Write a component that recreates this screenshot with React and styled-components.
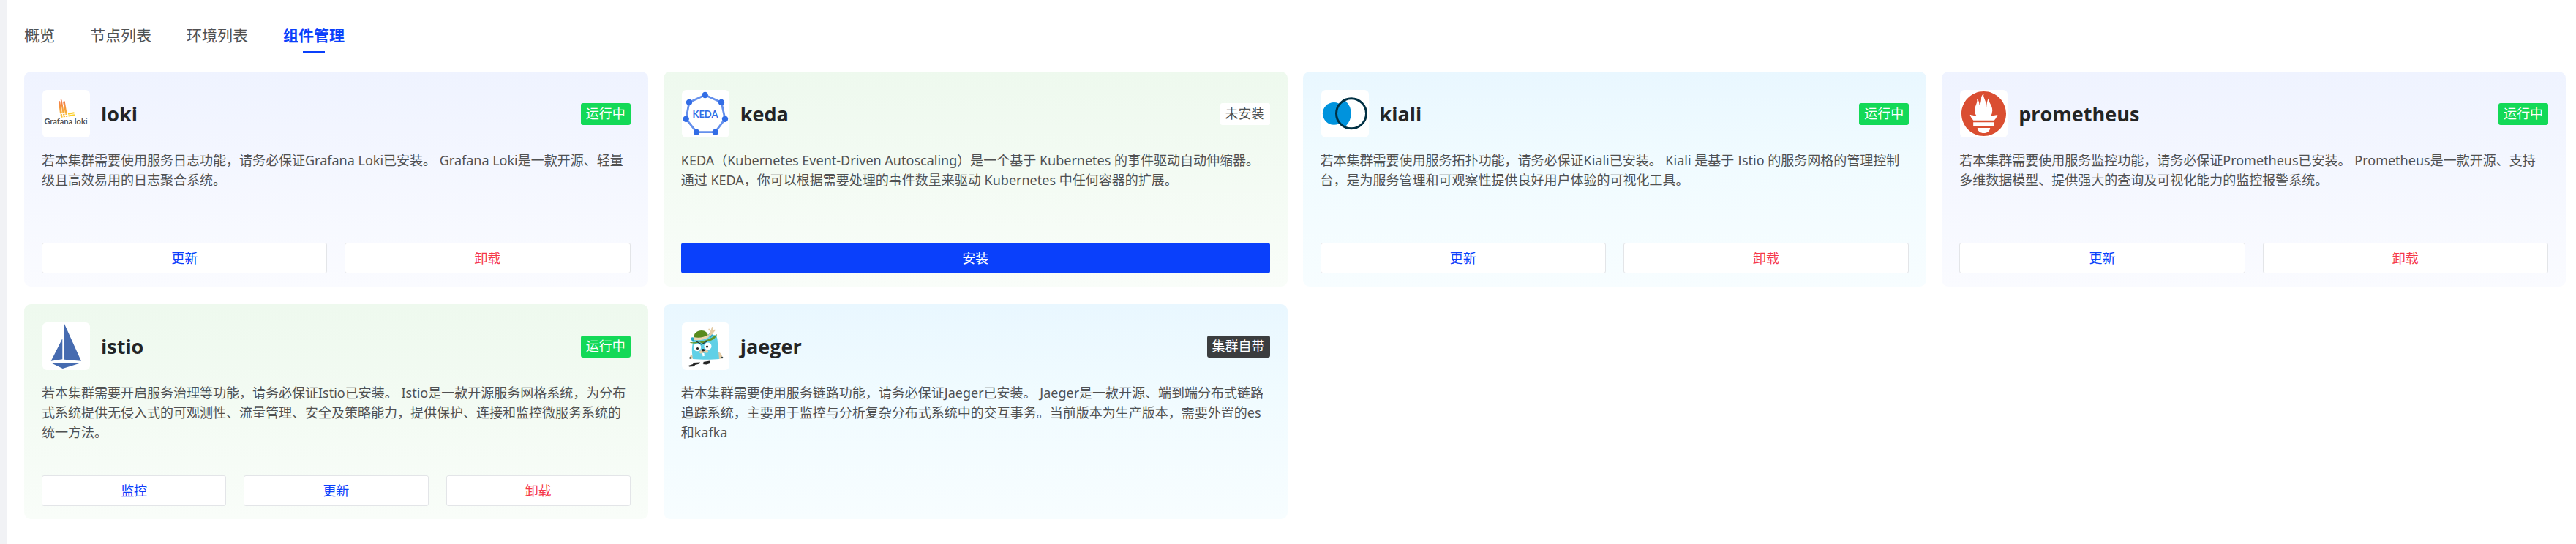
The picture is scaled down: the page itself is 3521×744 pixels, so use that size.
import React from "react";
import styled, { createGlobalStyle, css } from "styled-components";
import { SiPrometheus } from "react-icons/si";

const GlobalStyle = createGlobalStyle`
  *, *::before, *::after { box-sizing: border-box; }
  body {
    margin: 0;
    background: #fff;
    color: #505152;
    font-family: "Noto Sans", "Noto Sans CJK SC", sans-serif;
    font-size: 18px;
    line-height: 27px;
  }
`;

const Page = styled.div`
  min-height: 100vh;
  border-left: 9px solid #f1f2f5;
  padding: 33px 14px 33px 24px;
`;

const Tabs = styled.nav`
  display: flex;
  gap: 48px;
  margin-bottom: 25px;
`;

const Tab = styled.a`
  display: flex;
  flex-direction: column;
  align-items: center;
  gap: 7px;
  color: ${(p) => (p.$active ? "#0a40fb" : "#505152")};
  font-size: 21px;
  font-weight: ${(p) => (p.$active ? 700 : 400)};
  line-height: 30px;
  text-decoration: none;

  &::after {
    content: "";
    width: 30px;
    height: 3px;
    background: ${(p) => (p.$active ? "#0a40fb" : "transparent")};
  }
`;

const Grid = styled.main`
  display: grid;
  grid-template-columns: repeat(4, minmax(0, 1fr));
  gap: 24px 21px;
`;

const tones = {
  blue: "linear-gradient(#eff3ff, #fafbff)",
  green: "linear-gradient(#eef9ee, #f9fdf9)",
  cyan: "linear-gradient(#e9f7ff, #f0fbff 40%, #f7fdff)",
};

const Card = styled.article`
  display: flex;
  flex-direction: column;
  min-height: 294px;
  padding: 25px 24px 18px;
  border-radius: 9px;
  background: ${(p) => tones[p.$tone]};
`;

const CardHead = styled.header`
  display: flex;
  align-items: center;
  gap: 15px;
  padding-left: 1px;
`;

const Logo = styled.div`
  display: grid;
  place-items: center;
  flex: none;
  width: 65px;
  height: 65px;
  border-radius: 6px;
  background: #fff;
  overflow: hidden;
`;

const Name = styled.h2`
  flex: 1;
  margin: 0;
  color: #232425;
  font-family: "Open Sans", "Noto Sans CJK SC", sans-serif;
  font-size: 27px;
  font-weight: 700;
  line-height: 36px;
`;

const badges = {
  running: css`background: #13d957; color: #fff;`,
  absent: css`background: #fff; color: #505152;`,
  builtin: css`background: #3b3d3f; color: #fff;`,
};

const Badge = styled.span`
  padding: 1px 7px 2px;
  border-radius: 3px;
  ${(p) => badges[p.$kind]}
`;

const Description = styled.p`
  margin: 18px 0;
`;

const Actions = styled.footer`
  display: flex;
  gap: 24px;
  margin-top: auto;
`;

const buttons = {
  plain: css`background: #fff; border-color: #e3e5e8; color: #0a40fb;`,
  danger: css`background: #fff; border-color: #e3e5e8; color: #f5384b;`,
  primary: css`background: #0a40fb; border-color: #0a40fb; color: #fff;`,
};

const Button = styled.button`
  flex: 1;
  height: 42px;
  padding: 0;
  border: 1px solid;
  border-radius: 3px;
  font: inherit;
  cursor: pointer;
  ${(p) => buttons[p.$kind]}
`;

const LogoText = styled.text`
  font-family: Lato, sans-serif;
  font-weight: 700;
  font-size: ${(p) => p.$size}px;
  text-anchor: middle;
`;

function LokiLogo() {
  return (
    <svg width="65" height="65" viewBox="0 0 65 65" aria-hidden="true">
      <defs>
        <linearGradient id="lokiFlame" x1="0" y1="12" x2="0" y2="38" gradientUnits="userSpaceOnUse">
          <stop offset="0" stopColor="#f0714f" />
          <stop offset="1" stopColor="#fbc52d" />
        </linearGradient>
      </defs>
      <g fill="url(#lokiFlame)">
        <path d="M22 16l2-1 3 17-3 .5zM24.600 12l2 1.800 3.200 18-2.300.4zM28 16l2.600-.8 2.800 16-2.600.5z" />
        <path d="M24.500 33.400l2.400-.4.300 1.800-2.400.4zM28 32.900l2.300-.4.300 1.800-2.300.4zM31.200 32.300l2.400-.4.300 1.800-2.400.4zM25 36.200l2.400-.4.300 1.800-2.400.4zM28.500 35.700l2.300-.4.300 1.800-2.300.4zM31.700 35.200l2.400-.4.300 1.800-2.400.4z" />
      </g>
      <path d="M34.800 31.700l8.500-1.500.4 2-8.500 1.500zM35.300 34.600l8.500-1.400.3 2-8.500 1.400z" fill="#fbd02b" />
      <LogoText x="32" y="47" $size={11} fill="#555">Grafana loki</LogoText>
    </svg>
  );
}

const kedaPoints = [[31.700, 7], [54, 17], [59, 39.700], [45.700, 57.700], [20, 57.700], [5.700, 39.700], [10, 17]];

function KedaLogo() {
  return (
    <svg width="65" height="65" viewBox="0 0 65 65" aria-hidden="true">
      <polygon points={kedaPoints.join(" ")} fill="none" stroke="#6590ec" strokeWidth="2.800" />
      {kedaPoints.map(([x, y]) => (
        <circle key={`${x}-${y}`} cx={x} cy={y} r="4.200" fill="#326de6" />
      ))}
      <LogoText x="32" y="38" $size={13} fill="#326de6">KEDA</LogoText>
    </svg>
  );
}

function KialiLogo() {
  return (
    <svg width="65" height="65" viewBox="0 0 65 65" aria-hidden="true">
      <defs>
        <clipPath id="kialiRing">
          <circle cx="41" cy="32.300" r="20.500" />
        </clipPath>
      </defs>
      <circle cx="17.300" cy="32.300" r="15.400" fill="#0093dd" />
      <circle cx="41" cy="32.300" r="20.500" fill="#fff" />
      <circle cx="17.300" cy="32.300" r="23.500" fill="#0093dd" clipPath="url(#kialiRing)" />
      <circle cx="41" cy="32.300" r="20.500" fill="none" stroke="#013144" strokeWidth="3" />
    </svg>
  );
}

function IstioLogo() {
  return (
    <svg width="65" height="65" viewBox="0 0 65 65" fill="#466bb0" aria-hidden="true">
      <path d="M30 2v48.700l23 2zM27.300 22v28.300l-15.600 2.400zM11.700 55.300h41L27.700 63z" />
    </svg>
  );
}

function JaegerLogo() {
  return (
    <svg width="65" height="65" viewBox="0 0 65 65" aria-hidden="true">
      <path d="M14 44c-3 1-4 4-2 6l4-1zM48 40c4 0 8 4 7 9l-4 1-4-6z" fill="#e3cba5" />
      <path d="M15 28c-2-4 0-7 3-7l26-4c3 0 4 2 4.500 6L51 50c-9 1-25 1-36 0-1-8-2-14 0-22z" fill="#60d0e6" />
      <path d="M12 21c4-2 5 0 5 4l-3 1zM36 17c2-4 6-3 6 1l-3 3z" fill="#2ba5c4" />
      <path d="M10.500 27c14 1 28-3 37.500-11-1 6-8 10-15 10l-4 3-5-2c-5 2-10 2-13.500 0z" fill="#65952a" />
      <path d="M16 21c0-6 5-10 11-10 5 0 8 3 9 7-6 4-13 6-19 6z" fill="#578a1e" />
      <path d="M16 20c8 2 14 0 20-3l1 3c-6 4-13 5-20 4z" fill="#e8d5b2" />
      <path d="M36 18l3-5-3-4 1.500-.5 2 3L41 6l2 .5-1 5 3-2 1 1-5 6-3 3z" fill="#e3cba5" />
      <path d="M20 26l7 4 7-4" fill="none" stroke="#21383e" strokeWidth="1.200" />
      <circle cx="21" cy="34" r="5.200" fill="#fff" />
      <circle cx="35.500" cy="32.500" r="5" fill="#fff" />
      <circle cx="21.500" cy="35.500" r="1.600" fill="#222" />
      <circle cx="34.500" cy="33" r="1.600" fill="#222" />
      <path d="M28 42h2.500l.3 4-2.400.2z" fill="#fff" />
      <path d="M24 40c1-3 9-4 12-1 1 4-5 2-6 2-2 1-6 3-6-1z" fill="#e3cba5" />
      <ellipse cx="29" cy="37.800" rx="2.300" ry="1.700" fill="#222" />
      <circle cx="11.500" cy="48.500" r="1.300" fill="#344" />
      <circle cx="55" cy="48" r="1.300" fill="#344" />
      <path d="M9 59l6-2 1-2 9-.5-1 2-6 1.500-1 2-7 .5zM29 54l9-1.500.5 3.500-5 1.500-5-.5 2-1.500z" fill="#252525" />
    </svg>
  );
}

const update = { label: "更新", kind: "plain" };
const uninstall = { label: "卸载", kind: "danger" };
const running = { label: "运行中", kind: "running" };

const components = [
  {
    name: "loki",
    tone: "blue",
    logo: <LokiLogo />,
    badge: running,
    text: "若本集群需要使用服务日志功能，请务必保证Grafana Loki已安装。 Grafana Loki是一款开源、轻量级且高效易用的日志聚合系统。",
    actions: [update, uninstall],
  },
  {
    name: "keda",
    tone: "green",
    logo: <KedaLogo />,
    badge: { label: "未安装", kind: "absent" },
    text: "KEDA（Kubernetes Event-Driven Autoscaling）是一个基于 Kubernetes 的事件驱动自动伸缩器。通过 KEDA，你可以根据需要处理的事件数量来驱动 Kubernetes 中任何容器的扩展。",
    actions: [{ label: "安装", kind: "primary" }],
  },
  {
    name: "kiali",
    tone: "cyan",
    logo: <KialiLogo />,
    badge: running,
    text: "若本集群需要使用服务拓扑功能，请务必保证Kiali已安装。 Kiali 是基于 Istio 的服务网格的管理控制台，是为服务管理和可观察性提供良好用户体验的可视化工具。",
    actions: [update, uninstall],
  },
  {
    name: "prometheus",
    tone: "blue",
    logo: <SiPrometheus size={61} color="#da4e31" aria-hidden="true" />,
    badge: running,
    text: "若本集群需要使用服务监控功能，请务必保证Prometheus已安装。 Prometheus是一款开源、支持多维数据模型、提供强大的查询及可视化能力的监控报警系统。",
    actions: [update, uninstall],
  },
  {
    name: "istio",
    tone: "green",
    logo: <IstioLogo />,
    badge: running,
    text: "若本集群需要开启服务治理等功能，请务必保证Istio已安装。 Istio是一款开源服务网格系统，为分布式系统提供无侵入式的可观测性、流量管理、安全及策略能力，提供保护、连接和监控微服务系统的统一方法。",
    actions: [{ label: "监控", kind: "plain" }, update, uninstall],
  },
  {
    name: "jaeger",
    tone: "cyan",
    logo: <JaegerLogo />,
    badge: { label: "集群自带", kind: "builtin" },
    text: "若本集群需要使用服务链路功能，请务必保证Jaeger已安装。 Jaeger是一款开源、端到端分布式链路追踪系统，主要用于监控与分析复杂分布式系统中的交互事务。当前版本为生产版本，需要外置的es和kafka",
    actions: [],
  },
];

const tabs = ["概览", "节点列表", "环境列表", "组件管理"];

export default function App() {
  return (
    <Page lang="zh-CN">
      <GlobalStyle />
      <Tabs>
        {tabs.map((tab) => (
          <Tab key={tab} href="#" $active={tab === "组件管理"}>{tab}</Tab>
        ))}
      </Tabs>
      <Grid>
        {components.map((item) => (
          <Card key={item.name} $tone={item.tone}>
            <CardHead>
              <Logo>{item.logo}</Logo>
              <Name>{item.name}</Name>
              <Badge $kind={item.badge.kind}>{item.badge.label}</Badge>
            </CardHead>
            <Description>{item.text}</Description>
            {item.actions.length > 0 && (
              <Actions>
                {item.actions.map((action) => (
                  <Button key={action.label} type="button" $kind={action.kind}>{action.label}</Button>
                ))}
              </Actions>
            )}
          </Card>
        ))}
      </Grid>
    </Page>
  );
}
